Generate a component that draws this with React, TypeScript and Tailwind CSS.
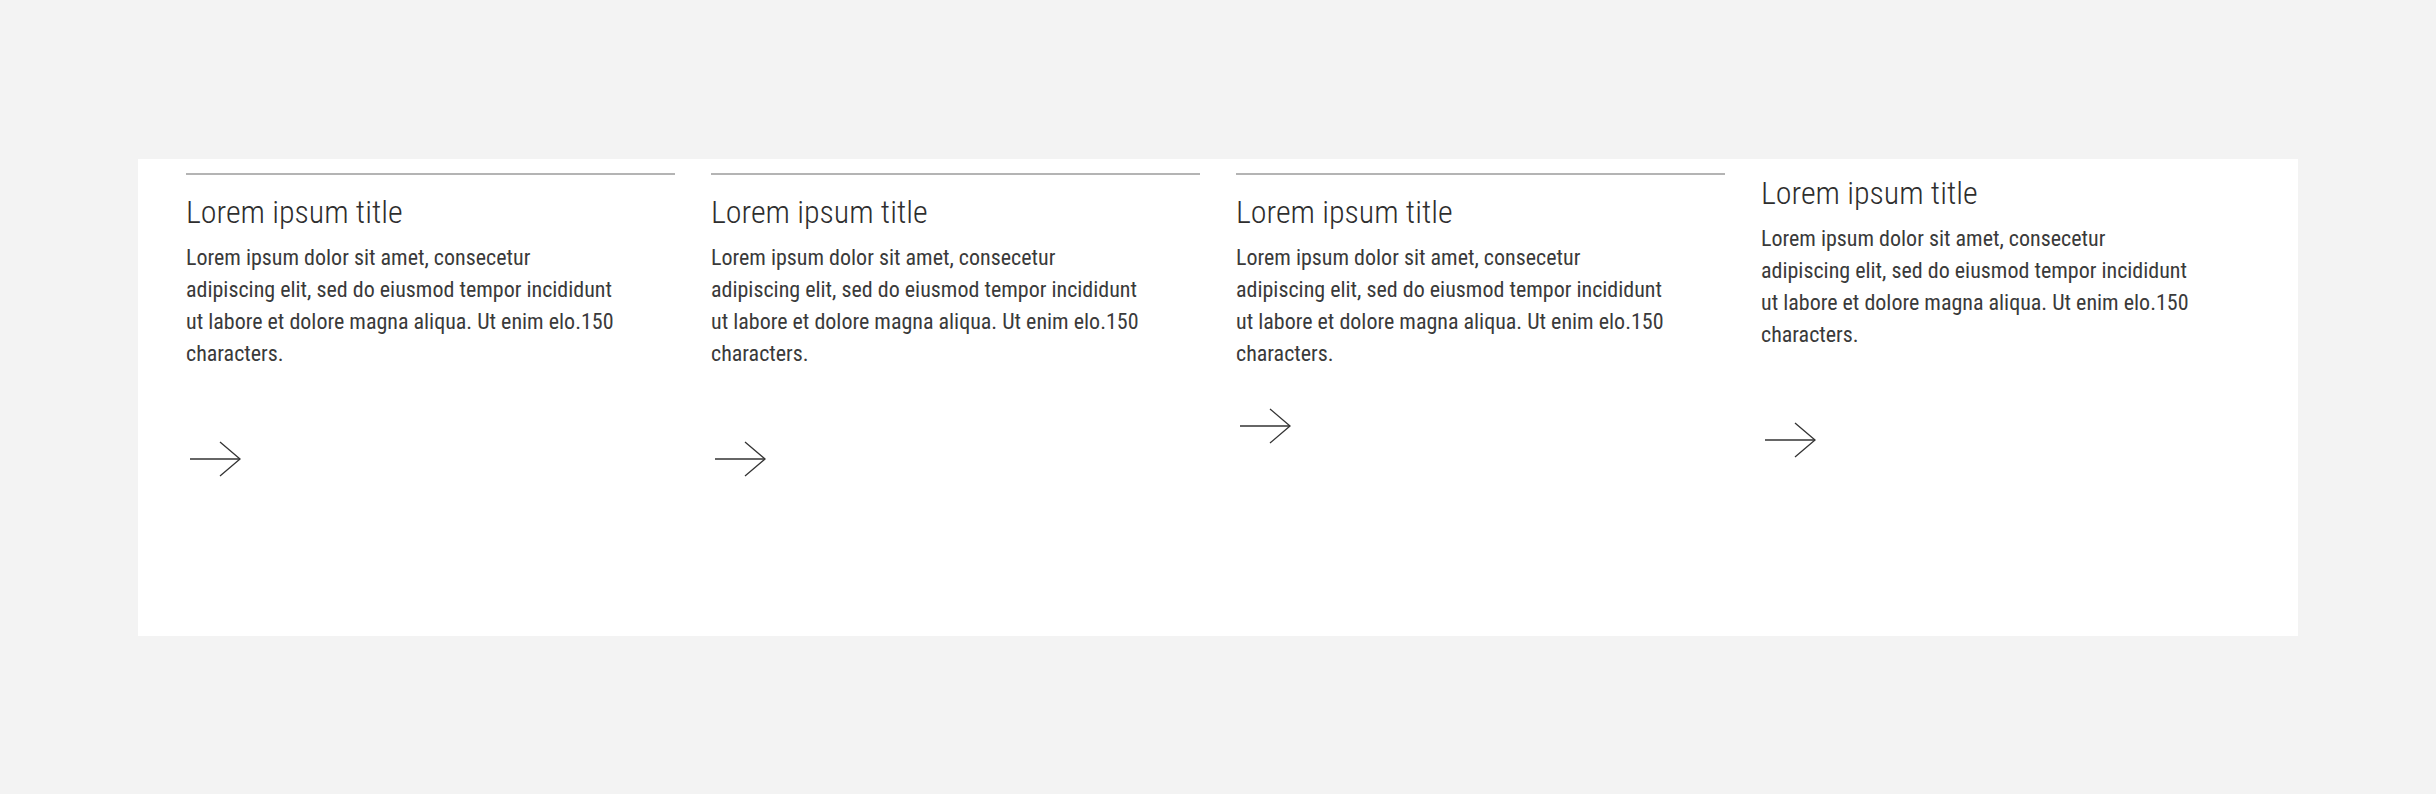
import React from "react";

type Card = {
  title: string;
  lines: string[];
  divider: boolean;
  arrowGap: string;
};

const body = [
  "Lorem ipsum dolor sit amet, consecetur",
  "adipiscing elit, sed do eiusmod tempor incididunt",
  "ut labore et dolore magna aliqua. Ut enim elo.150",
  "characters.",
];

const cards: Card[] = [
  { title: "Lorem ipsum title", lines: body, divider: true, arrowGap: "mt-[69px]" },
  { title: "Lorem ipsum title", lines: body, divider: true, arrowGap: "mt-[69px]" },
  { title: "Lorem ipsum title", lines: body, divider: true, arrowGap: "mt-[36px]" },
  { title: "Lorem ipsum title", lines: body, divider: false, arrowGap: "mt-[69px]" },
];

function ArrowRight() {
  return (
    <svg width="56" height="40" viewBox="0 0 56 40" fill="none" aria-hidden="true">
      <path d="M4 20H54" stroke="#333333" strokeWidth="1.6" />
      <path d="M34 3L54 20L34 37" stroke="#333333" strokeWidth="1.3" />
    </svg>
  );
}

function TeaserCard({ card }: { card: Card }) {
  return (
    <div className="flex flex-col">
      {card.divider ? <div className="mb-[17px] h-[2px] w-full bg-[#b4b4b4]" /> : null}
      <h3 className="text-[32px] leading-[40px] font-light text-[#2e2e2e] whitespace-nowrap">
        {card.title}
      </h3>
      <p className="mt-[10px] text-[22px] leading-[32px] font-normal text-[#3a3a3a] whitespace-nowrap">
        {card.lines.map((line, i) => (
          <React.Fragment key={i}>
            {line}
            {i < card.lines.length - 1 ? <br /> : null}
          </React.Fragment>
        ))}
      </p>
      <div className={card.arrowGap}>
        <ArrowRight />
      </div>
    </div>
  );
}

export default function App() {
  return (
    <div className="min-h-screen bg-[#f3f3f3] px-[138px] pt-[159px] font-['Roboto',sans-serif] [font-stretch:75%]">
      <section className="grid h-[477px] grid-cols-4 gap-[36px] bg-white px-[48px] pt-[14px]">
        {cards.map((card, i) => (
          <TeaserCard key={i} card={card} />
        ))}
      </section>
    </div>
  );
}
